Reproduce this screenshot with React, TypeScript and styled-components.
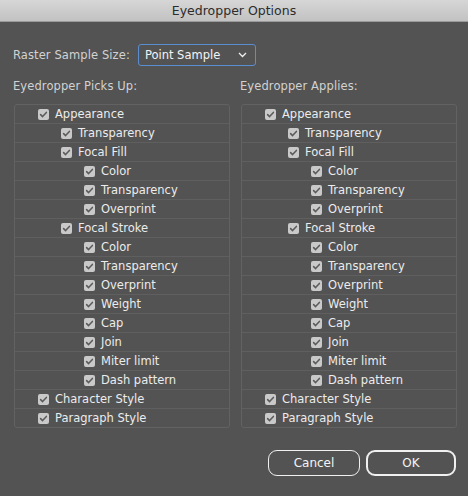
import React from "react";
import styled, { createGlobalStyle } from "styled-components";

type Item = { label: string; level: number };

const items: Item[] = [
  { label: "Appearance", level: 0 },
  { label: "Transparency", level: 1 },
  { label: "Focal Fill", level: 1 },
  { label: "Color", level: 2 },
  { label: "Transparency", level: 2 },
  { label: "Overprint", level: 2 },
  { label: "Focal Stroke", level: 1 },
  { label: "Color", level: 2 },
  { label: "Transparency", level: 2 },
  { label: "Overprint", level: 2 },
  { label: "Weight", level: 2 },
  { label: "Cap", level: 2 },
  { label: "Join", level: 2 },
  { label: "Miter limit", level: 2 },
  { label: "Dash pattern", level: 2 },
  { label: "Character Style", level: 0 },
  { label: "Paragraph Style", level: 0 },
];

const CheckMark = () => (
  <svg width="11" height="11" viewBox="0 0 11 11">
    <path
      d="M2.6 5.6 L4.6 7.6 L8.4 3.4"
      fill="none"
      stroke="#5a5a5a"
      strokeWidth="1.5"
      strokeLinecap="round"
      strokeLinejoin="round"
    />
  </svg>
);

const Chevron = () => (
  <svg width="9" height="6" viewBox="0 0 9 6">
    <path d="M1 1 L4.5 4.5 L8 1" fill="none" stroke="#f0f0f0" strokeWidth="1.3" />
  </svg>
);

const TreePanel = () => (
  <Panel>
    {items.map((item, i) => (
      <Row key={i} $level={item.level}>
        <Box>
          <CheckMark />
        </Box>
        <RowLabel>{item.label}</RowLabel>
      </Row>
    ))}
  </Panel>
);

const App = () => {
  return (
    <>
      <GlobalStyle />
      <Window>
        <TitleBar>Eyedropper Options</TitleBar>
        <Content>
          <SampleRow>
            <Label>Raster Sample Size:</Label>
            <Select>
              <span>Point Sample</span>
              <Chevron />
            </Select>
          </SampleRow>
          <Columns>
            <Column>
              <Label>Eyedropper Picks Up:</Label>
              <TreePanel />
            </Column>
            <Column>
              <Label>Eyedropper Applies:</Label>
              <TreePanel />
            </Column>
          </Columns>
          <Buttons>
            <Button>Cancel</Button>
            <Button $primary>OK</Button>
          </Buttons>
        </Content>
      </Window>
    </>
  );
};

const GlobalStyle = createGlobalStyle`
  html, body {
    margin: 0;
    padding: 0;
    background: #535353;
  }
  body {
    font-family: "DejaVu Sans", "Liberation Sans", sans-serif;
  }
`;

const Window = styled.div`
  width: 468px;
  height: 496px;
  background: #535353;
  overflow: hidden;
`;

const TitleBar = styled.div`
  height: 21px;
  line-height: 21px;
  text-align: center;
  font-size: 12.5px;
  color: #2c2c2c;
  background: linear-gradient(#d6d6d6, #c2c2c2);
  border-bottom: 1px solid #9a9a9a;
`;

const Content = styled.div`
  padding: 22px 11px 0 13px;
`;

const SampleRow = styled.div`
  display: flex;
  align-items: center;
  gap: 8px;
  height: 22px;
`;

const Label = styled.div`
  font-size: 11.5px;
  color: #d2d2d2;
  letter-spacing: 0.1px;
`;

const Select = styled.div`
  box-sizing: border-box;
  width: 118px;
  height: 22px;
  border: 1px solid #5a8ed0;
  border-radius: 3px;
  display: flex;
  align-items: center;
  justify-content: space-between;
  padding: 0 8px 0 6px;
  font-size: 11.5px;
  color: #f4f4f4;
`;

const Columns = styled.div`
  display: grid;
  grid-template-columns: 216px 216px;
  column-gap: 11px;
  margin-top: 13px;
  margin-left: 1px;
  & ${Label} {
    margin-left: -1px;
    height: 25px;
  }
`;

const Column = styled.div`
  display: flex;
  flex-direction: column;
`;

const Panel = styled.div`
  box-sizing: border-box;
  border: 1px solid #626262;
  border-radius: 3px;
`;

const Row = styled.div<{ $level: number }>`
  height: 18px;
  display: flex;
  align-items: center;
  gap: 6px;
  padding-left: ${({ $level }) => 23 + $level * 23}px;
  border-bottom: 1px solid #5f5f5f;
  &:last-child {
    border-bottom: none;
  }
`;

const Box = styled.div`
  width: 11px;
  height: 11px;
  border-radius: 2px;
  background: #c9c9c9;
  display: flex;
`;

const RowLabel = styled.span`
  font-size: 11.5px;
  color: #ececec;
`;

const Buttons = styled.div`
  display: flex;
  justify-content: flex-end;
  gap: 6px;
  margin-top: 22px;
  padding-right: 1px;
`;

const Button = styled.div<{ $primary?: boolean }>`
  box-sizing: border-box;
  width: ${({ $primary }) => ($primary ? 90 : 92)}px;
  height: 26px;
  border: ${({ $primary }) => ($primary ? 2 : 1)}px solid #f0f0f0;
  border-radius: 9px;
  display: flex;
  align-items: center;
  justify-content: center;
  font-size: 12px;
  color: #f4f4f4;
`;

export default App;
